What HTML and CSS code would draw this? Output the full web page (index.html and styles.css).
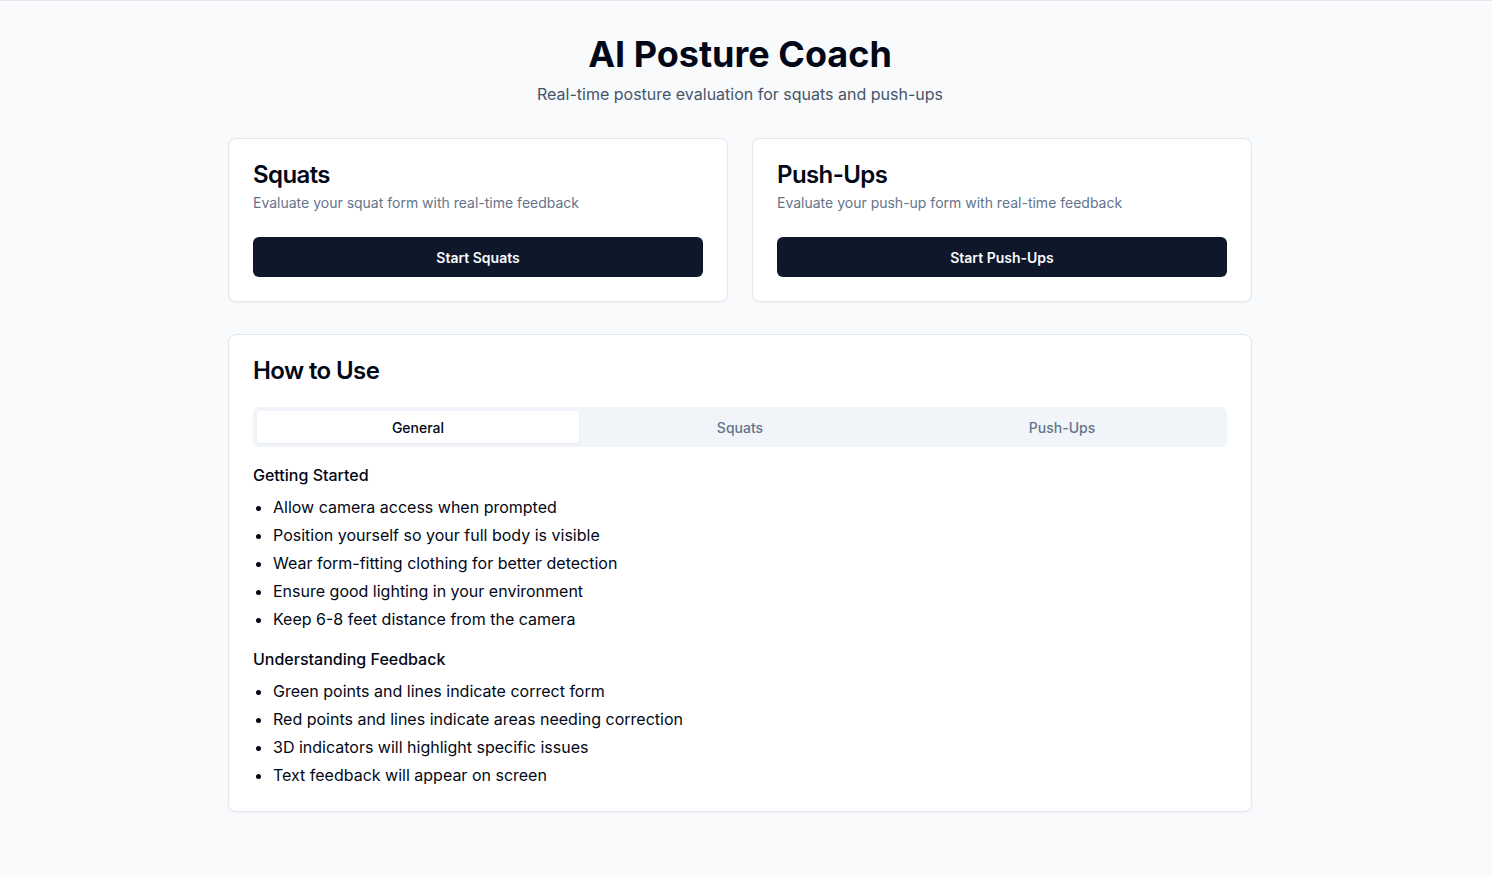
FILE: index.html
```html
<!DOCTYPE html>
<html lang="en">
<head>
<meta charset="utf-8">
<title>AI Posture Coach</title>
<link rel="stylesheet" href="styles.css">
</head>
<body>
<main class="page">
  <header class="hero">
    <h1 class="hero-title">AI Posture Coach</h1>
    <p class="hero-sub">Real-time posture evaluation for squats and push-ups</p>
  </header>

  <section class="exercise-grid">
    <div class="card">
      <div class="card-header">
        <h2 class="card-title">Squats</h2>
        <p class="card-desc">Evaluate your squat form with real-time feedback</p>
      </div>
      <div class="card-content">
        <button class="btn">Start Squats</button>
      </div>
    </div>
    <div class="card">
      <div class="card-header">
        <h2 class="card-title">Push-Ups</h2>
        <p class="card-desc">Evaluate your push-up form with real-time feedback</p>
      </div>
      <div class="card-content">
        <button class="btn">Start Push-Ups</button>
      </div>
    </div>
  </section>

  <section class="card howto">
    <div class="card-header">
      <h2 class="card-title">How to Use</h2>
    </div>
    <div class="card-content">
      <div class="tabs-list">
        <button class="tab active">General</button>
        <button class="tab">Squats</button>
        <button class="tab">Push-Ups</button>
      </div>
      <div class="tab-content">
        <h3 class="section-title">Getting Started</h3>
        <ul class="bullets">
          <li>Allow camera access when prompted</li>
          <li>Position yourself so your full body is visible</li>
          <li>Wear form-fitting clothing for better detection</li>
          <li>Ensure good lighting in your environment</li>
          <li>Keep 6-8 feet distance from the camera</li>
        </ul>
        <h3 class="section-title">Understanding Feedback</h3>
        <ul class="bullets">
          <li>Green points and lines indicate correct form</li>
          <li>Red points and lines indicate areas needing correction</li>
          <li>3D indicators will highlight specific issues</li>
          <li>Text feedback will appear on screen</li>
        </ul>
      </div>
    </div>
  </section>
</main>
</body>
</html>
```

FILE: styles.css
```css
* { box-sizing: border-box; }

html, body {
  margin: 0;
  padding: 0;
}

body {
  background: #f8fafc;
  font-family: Inter, "Noto Sans", sans-serif;
  color: #020817;
  border-top: 1px solid #e5e7eb;
  min-height: 877px;
  padding-right: 12px;
}

.page {
  max-width: 1024px;
  margin: 0 auto;
  padding: 33px 0 32px;
}

.hero {
  text-align: center;
  margin-bottom: 32px;
}

.hero-title {
  margin: 0 0 8px;
  font-size: 36px;
  line-height: 40px;
  font-weight: 700;
  color: #020817;
}

.hero-sub {
  margin: 0;
  font-size: 16px;
  line-height: 24px;
  color: #475569;
}

.exercise-grid {
  display: grid;
  grid-template-columns: 1fr 1fr;
  gap: 24px;
  margin-bottom: 32px;
}

.card {
  background: #ffffff;
  border: 1px solid #e2e8f0;
  border-radius: 8px;
  box-shadow: 0 1px 2px rgba(0, 0, 0, 0.05);
}

.card-header {
  padding: 24px;
  display: flex;
  flex-direction: column;
  gap: 6px;
}

.card-title {
  margin: 0;
  font-size: 24px;
  line-height: 24px;
  font-weight: 600;
  letter-spacing: -0.6px;
  color: #020817;
}

.card-desc {
  margin: 0;
  font-size: 14px;
  line-height: 20px;
  color: #64748b;
}

.card-content {
  padding: 0 24px 24px;
}

.btn {
  display: block;
  width: 100%;
  height: 40px;
  border: 0;
  border-radius: 6px;
  background: #0f172a;
  color: #f8fafc;
  font-family: inherit;
  font-size: 14px;
  font-weight: 600;
  cursor: pointer;
}

.tabs-list {
  display: grid;
  grid-template-columns: repeat(3, 1fr);
  height: 40px;
  padding: 4px;
  background: #f1f5f9;
  border-radius: 6px;
}

.tab {
  border: 0;
  background: transparent;
  border-radius: 4px;
  font-family: inherit;
  font-size: 14px;
  font-weight: 500;
  color: #64748b;
  cursor: pointer;
}

.tab.active {
  background: #ffffff;
  color: #020817;
  box-shadow: 0 1px 2px rgba(0, 0, 0, 0.05);
}

.tab-content {
  margin-top: 16px;
}

.section-title {
  margin: 0 0 8px;
  font-size: 16px;
  line-height: 24px;
  font-weight: 500;
}

.bullets {
  margin: 0 0 16px;
  padding-left: 20px;
  list-style: disc;
  display: flex;
  flex-direction: column;
  gap: 4px;
}

.bullets:last-child {
  margin-bottom: 0;
}

.bullets li {
  font-size: 16px;
  line-height: 24px;
}
```
